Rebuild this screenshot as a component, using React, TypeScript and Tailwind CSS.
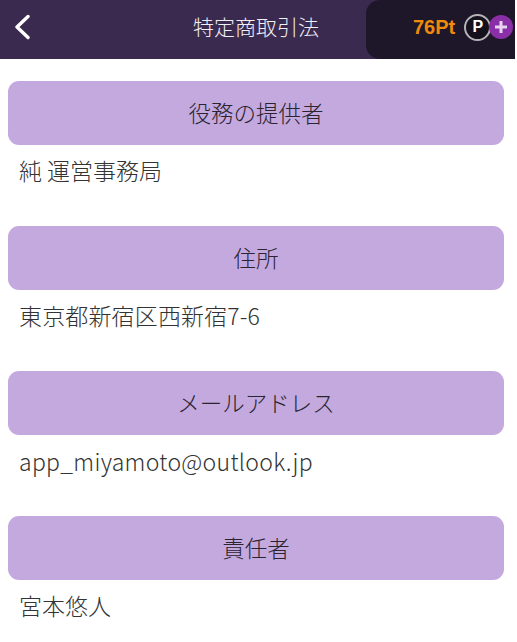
const sections = [
  { title: "役務の提供者", body: "純 運営事務局", extra: "" },
  { title: "住所", body: "東京都新宿区西新宿7-6", extra: "tracking-[0.15px]" },
  { title: "メールアドレス", body: "app_miyamoto@outlook.jp", extra: "pt-[1px] tracking-[0.3px]" },
  { title: "責任者", body: "宮本悠人", extra: "" },
]

const font = { fontFamily: '"Noto Sans CJK JP", "Liberation Sans", sans-serif' }

export default function App() {
  return (
    <div className="h-[642px] w-[517px] overflow-hidden bg-white" style={font}>
      {/* Header */}
      <div className="flex h-[59px] w-[515px] items-stretch bg-[#3b2a4f]">
        <div className="flex w-[44px] items-center pb-[5px] pl-[13px]">
          <svg width="17" height="26" viewBox="0 0 17 26" fill="none">
            <path d="M15 2.5 L4 13 L15 23.5" stroke="white" strokeWidth="3.4" strokeLinejoin="round" strokeLinecap="round" />
          </svg>
        </div>
        <div className="flex w-[322px] items-center justify-center pb-[5px] pl-[102px] text-[21px] font-light text-[#f1eef4]">
          特定商取引法
        </div>
        <div className="flex flex-1 items-center rounded-l-[14px] bg-[#1d1729] pb-[5px] pl-[47px]">
          <span className="font-['Liberation_Sans'] text-[20px] font-bold text-[#f08a0c]">76Pt</span>
          <div className="ml-[9px] flex h-[27px] w-[27px] shrink-0 items-center justify-center rounded-full border-[2px] border-[#b5b3b8] bg-[#14101c] font-['Liberation_Sans'] text-[16px] leading-none font-bold text-white">
            P
          </div>
          <div className="relative ml-[-2px] flex h-[24px] w-[24px] shrink-0 items-center justify-center rounded-full bg-[#8a2fa8]">
            <svg width="16" height="16" viewBox="0 0 16 16">
              <path d="M8 2 V14 M2 8 H14" stroke="#e6d3ee" strokeWidth="3" />
            </svg>
          </div>
        </div>
      </div>

      {/* Sections */}
      <div className="flex w-[512px] flex-col gap-[18px] pl-2 pr-2 pt-[22px]">
        {sections.map((s) => (
          <div key={s.title} className="h-[127px]">
            <div className="flex h-[64px] items-center justify-center rounded-[11px] bg-[#c4a9df] text-[22.5px] font-light text-[#2a2430]">
              {s.title}
            </div>
            <div className={`mt-[10px] pl-[11px] text-[23px] leading-[30px] font-light text-[#333] ${s.extra}`}>{s.body}</div>
          </div>
        ))}
      </div>
    </div>
  )
}
